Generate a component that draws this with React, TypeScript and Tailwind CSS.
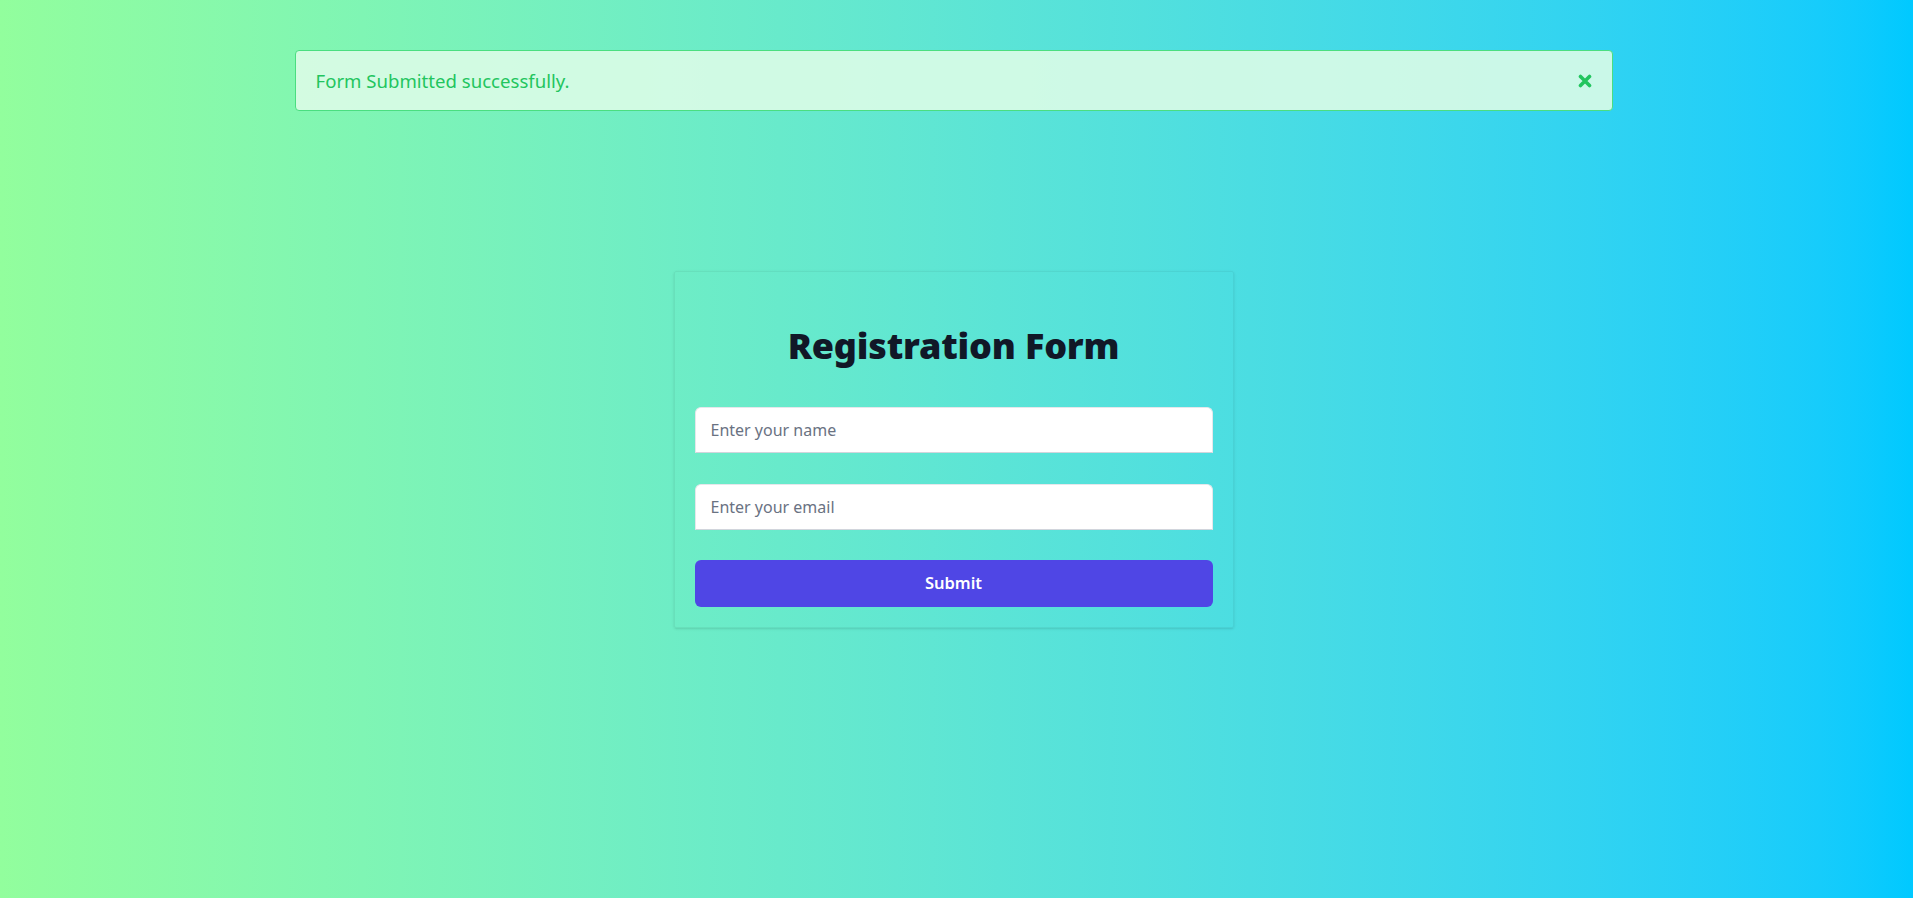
const font = { fontFamily: '"Noto Sans", "Open Sans", sans-serif' };

const CloseIcon = () => (
  <svg width="14" height="14" viewBox="0 0 14 14" fill="none">
    <path d="M2.5 2.5 L11.5 11.5 M11.5 2.5 L2.5 11.5" stroke="currentColor" strokeWidth="3.6" strokeLinecap="round" />
  </svg>
);

export default function App() {
  return (
    <div
      className="w-full min-h-screen h-[898px] bg-gradient-to-r from-[#92fe9d] to-[#00c9ff] pt-[50px] pr-[6px]"
      style={font}
    >
      {/* Alert */}
      <div className="w-[1318px] mx-auto h-[61px] flex items-center justify-between pl-[20px] pr-[20px] rounded-[4px] border border-[#4ade80] bg-[#dcfce7]/90">
        <span className="text-[18.6px] text-[#22c55e]">Form Submitted successfully.</span>
        <button className="text-[#22c55e]">
          <CloseIcon />
        </button>
      </div>

      {/* Card */}
      <div className="mx-auto mt-[160px] w-[560px] h-[357px] border border-black/5 shadow rounded-[2px] px-[20px] pt-[54px]">
        <h1 className="text-center text-[36px] leading-[40px] font-black text-[#111827] tracking-[-0.2px]">
          Registration Form
        </h1>
        <form className="mt-[41px] flex flex-col" onSubmit={(e) => e.preventDefault()}>
          <input
            type="text"
            placeholder="Enter your name"
            className="h-[46px] w-full bg-white rounded-t-md border border-gray-200 border-b-gray-300 px-[15px] text-[16px] text-gray-700 placeholder:text-gray-500 outline-none"
          />
          <input
            type="email"
            placeholder="Enter your email"
            className="mt-[31px] h-[46px] w-full bg-white rounded-t-md border border-gray-200 border-b-gray-300 px-[15px] text-[16px] text-gray-700 placeholder:text-gray-500 outline-none"
          />
          <button
            type="submit"
            className="mt-[30px] h-[47px] w-full rounded-md bg-[#4f46e5] text-white text-[16.5px] font-semibold"
          >
            Submit
          </button>
        </form>
      </div>
    </div>
  );
}
